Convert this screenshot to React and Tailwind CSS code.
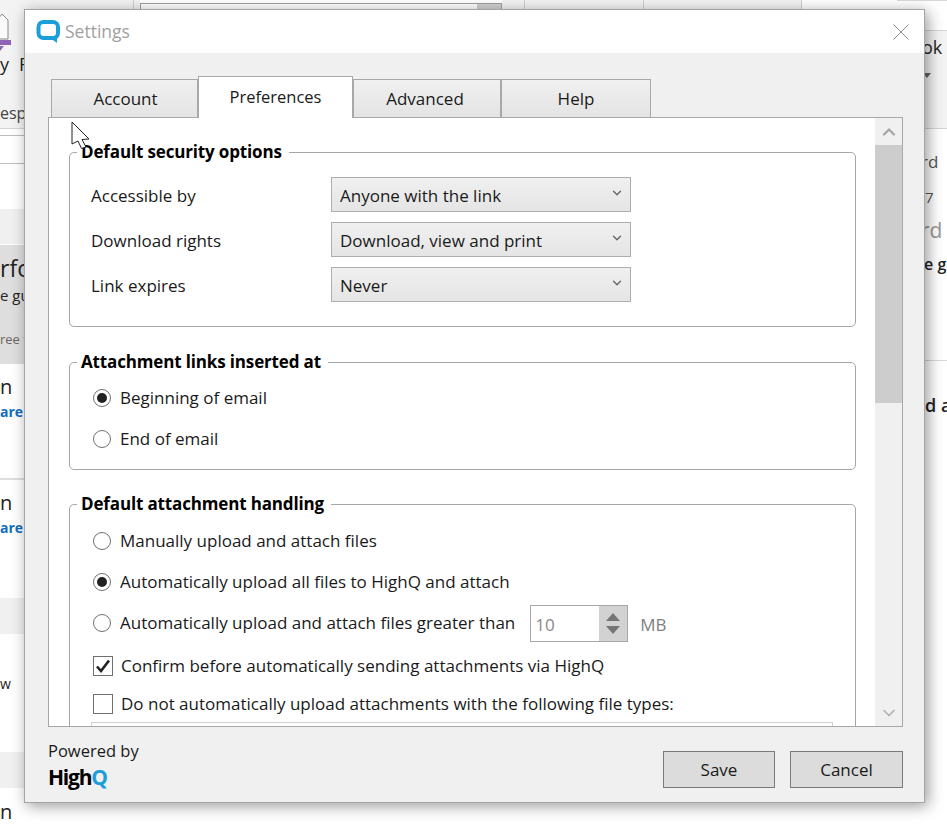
import { ChevronDown, ChevronUp } from "lucide-react";

const Tab = ({ label, active, className }) => (
  <div
    className={
      active
        ? `relative z-10 flex h-[42px] items-start justify-center border border-b-0 border-[#a8a8a8] bg-white pt-[10px] text-[16.500px] text-[#1a1a1a] ${className}`
        : `flex h-[39px] items-start justify-center border border-[#a8a8a8] bg-gradient-to-b from-[#f0f0f0] to-[#e4e4e4] pt-[9px] text-[#1a1a1a] ${className}`
    }
  >
    {label}
  </div>
);

const Group = ({ title, className, children }) => (
  <fieldset className={`ml-5 w-[787px] rounded-[5px] border border-[#a6a6a6] ${className || ""}`}>
    <legend className="ml-[7px] h-5 pl-1 pr-[7px] text-[17px] leading-5 font-bold tracking-[-0.15px] text-black">{title}</legend>
    {children}
  </fieldset>
);

const SelectBox = ({ label, value }) => (
  <>
    <div className="flex h-[35px] items-center pt-[2px]">{label}</div>
    <div className="flex h-[35px] items-center justify-between border border-[#adadad] bg-gradient-to-b from-[#f0f0f0] to-[#e5e5e5] pl-2 pr-[6px]">
      <span className="pt-[2px]">{value}</span>
      <ChevronDown size={14} strokeWidth={2.4} className="mb-[4px] text-[#666]" />
    </div>
  </>
);

const Radio = ({ checked }) => (
  <span className="flex h-[18px] w-[18px] shrink-0 items-center justify-center rounded-full border-[1.5px] border-[#707070] bg-white">
    {checked && <span className="h-[10px] w-[10px] rounded-full bg-[#222]" />}
  </span>
);

const RadioRow = ({ checked, label, className, children }) => (
  <div className={`flex h-5 items-center pl-[23px] ${className || ""}`}>
    <Radio checked={checked} />
    <span className="ml-[9px] whitespace-nowrap">{label}</span>
    {children}
  </div>
);

const CheckRow = ({ checked, label, className }) => (
  <div className={`flex h-5 items-center pl-[23px] ${className || ""}`}>
    <span className="flex h-[20px] w-[20px] shrink-0 items-center justify-center border-[1.5px] border-[#707070] bg-white">
      {checked && (
        <svg width="16" height="14" viewBox="0 0 16 14">
          <path d="M2 7.5 L6 12 L14 1.5" fill="none" stroke="#222" strokeWidth="2.6" />
        </svg>
      )}
    </span>
    <span className="ml-2 whitespace-nowrap">{label}</span>
  </div>
);

const LeftStrip = () => (
  <div className="w-[40px] shrink-0 overflow-hidden whitespace-nowrap text-[#222]">
    <div className="h-[129px] border-b border-[#d4d4d4] bg-[#f3f3f3]">
      <svg width="40" height="52" viewBox="0 0 40 52" className="block">
        <path d="M-6 24 L2 14 L8 20 L8 39 L-6 39 Z" fill="#fafafa" stroke="#8a8a8a" />
        <rect x="0" y="40" width="11" height="5" fill="#8d62b8" />
        <path d="M0 46 L4 46 L0 51 Z" fill="#8d62b8" />
        <circle cx="50" cy="14" r="8" fill="none" stroke="#8a8a8a" />
      </svg>
      <div className="flex h-6 text-[18px] leading-6">
        <span>y</span>
        <span className="ml-[10px]">F</span>
      </div>
      <div className="mt-[27px] text-[16px] leading-5 text-[#444]">espo</div>
    </div>
    <div className="h-[7px] border-b border-[#bdbdbd] bg-white" />
    <div className="h-[28px] border-b border-[#bdbdbd] bg-white" />
    <div className="h-[45px] bg-white" />
    <div className="h-[36px] border-b border-white bg-[#f0f0f0]" />
    <div className="h-[119px] bg-[#dedede]">
      <div className="pt-[9px] text-[23px] leading-7">rfor</div>
      <div className="mt-[3px] text-[15px] leading-5">e gu</div>
      <div className="mt-[24px] text-[13px] leading-5 text-[#666]">ree t</div>
    </div>
    <div className="h-[116px] border-b-2 border-[#dedede] bg-white">
      <div className="pt-[9px] text-[20px] leading-7">n</div>
      <div className="mt-[1px] text-[14px] leading-5 font-bold text-[#106ebe]">are</div>
    </div>
    <div className="h-[118px] bg-white">
      <div className="pt-[9px] text-[20px] leading-7">n</div>
      <div className="mt-[1px] text-[14px] leading-5 font-bold text-[#106ebe]">are</div>
    </div>
    <div className="h-[36px] bg-[#f0f0f0]" />
    <div className="h-[118px] bg-white pt-[40px] text-[14px] leading-5">w</div>
    <div className="h-[36px] bg-[#f0f0f0]" />
    <div className="pt-[10px] text-[20px] leading-7">n</div>
  </div>
);

const RightStrip = () => (
  <div className="w-[50px] shrink-0 overflow-hidden whitespace-nowrap text-[#222]">
    <div className="h-[30px] border-t border-[#d8d8d8] bg-white" />
    <div className="h-[99px] border-y border-[#d4d4d4] bg-[#f3f3f3] pl-[25px] pt-[4px] text-[18px] leading-6">
      <div>ok</div>
      <svg width="8" height="8" viewBox="0 0 8 8" className="ml-[1px] mt-[13px] block">
        <path d="M0 1 L8 1 L4 6 Z" fill="#666" />
      </svg>
    </div>
    <div className="h-[232px] border-b border-[#d8d8d8]">
      <div className="pl-[24px] pt-[23px] text-[17px] leading-5 text-[#555]">rd</div>
      <div className="mt-[15px] pl-[28px] text-[15px] leading-5 text-[#555]">7</div>
      <div className="mt-[13px] pl-[24px] text-[21px] leading-5 text-[#999]">rd</div>
      <div className="mt-[14px] pl-[27px] text-[16px] leading-5 font-semibold">e g</div>
    </div>
    <div className="pl-[28px] pt-[34px] text-[18px] leading-5 font-semibold">d a</div>
  </div>
);

const TopStrip = () => (
  <div className="flex h-[9px] min-w-0 flex-1 overflow-hidden">
    <div className="w-[94px] border-r border-[#d0d0d0] bg-[#f3f3f3]" />
    <div className="w-[6px] bg-[#f3f3f3]" />
    <div className="mt-[3px] flex h-[20px] w-[362px] border border-[#a0a0a0] bg-white">
      <div className="flex-1" />
      <div className="w-[24px] bg-[#d0d0d0]" />
    </div>
    <div className="w-[22px] bg-[#f3f3f3]" />
    <div className="w-[119px] border-l border-[#d0d0d0] bg-[#f3f3f3]" />
    <div className="w-[158px] border-l border-[#d0d0d0] bg-[#f3f3f3]" />
    <div className="flex-1 border-l border-[#d0d0d0] bg-white" />
  </div>
);

const App = () => {
  return (
    <div className="relative h-[824px] w-[947px] overflow-hidden bg-white font-['Open_Sans',sans-serif] text-[17px] leading-5 text-[#1a1a1a]">
      <div className="flex h-full">
        <LeftStrip />
        <TopStrip />
        <RightStrip />
      </div>

      {/* settings dialog */}
      <div className="absolute left-[24px] top-[9px] flex h-[794px] w-[901px] flex-col border border-[#a4a4a4] bg-[#f0f0f0] shadow-[3px_3px_14px_rgba(0,0,0,0.4)]">
        <div className="flex h-[43px] shrink-0 items-center bg-white pl-[11px] pr-[15px]">
          <svg width="25" height="25" viewBox="0 0 25 25">
            <path
              d="M7 3 H17 A5 5 0 0 1 22 8 V14 A5 5 0 0 1 17 19 H7 A5 5 0 0 1 2.500 14 V8 A5 5 0 0 1 7 3 Z"
              fill="none"
              stroke="#1a9fdb"
              strokeWidth="4"
            />
            <path d="M13 18 H21 V24 Z" fill="#1a9fdb" />
          </svg>
          <span className="ml-[4px] pb-[2px] text-[17.500px] text-[#a0a0a0]">Settings</span>
          <svg width="16" height="16" viewBox="0 0 16 16" className="ml-auto">
            <path d="M0.500 0.500 L15.500 15.500 M15.500 0.500 L0.500 15.500" stroke="#8a8a8a" strokeWidth="1" />
          </svg>
        </div>

        <div className="flex min-h-0 flex-1 flex-col pl-[23px] pr-[21px] pt-[23px]">
          <div className="relative -mb-px ml-[3px] flex shrink-0 items-end">
            <Tab label="Account" className="w-[147px] pl-[2px]" />
            <Tab label="Preferences" active className="w-[155px]" />
            <Tab label="Advanced" className="w-[148px] pr-[4px]" />
            <Tab label="Help" className="w-[150px]" />
          </div>

          <div className="flex h-[610px] shrink-0 border border-[#a8a8a8] bg-white">
            <div className="min-w-0 flex-1 overflow-hidden pt-[24px]">
              <Group title="Default security options">
                <div className="grid grid-cols-[240px_300px] gap-y-[10px] pb-[24px] pl-[21px] pt-[15px]">
                  <SelectBox label="Accessible by" value="Anyone with the link" />
                  <SelectBox label="Download rights" value="Download, view and print" />
                  <SelectBox label="Link expires" value="Never" />
                </div>
              </Group>

              <Group title="Attachment links inserted at" className="mt-[25px]">
                <div className="pb-[20px] pt-[16px]">
                  <RadioRow checked label="Beginning of email" />
                  <RadioRow label="End of email" className="mt-[21px]" />
                </div>
              </Group>

              <Group title="Default attachment handling" className="mt-[24px]">
                <div className="pb-6 pt-[17px]">
                  <RadioRow label="Manually upload and attach files" />
                  <RadioRow checked label="Automatically upload all files to HighQ and attach" className="mt-[21px]" />
                  <RadioRow label="Automatically upload and attach files greater than" className="mt-[21px]">
                    <div className="ml-[15px] flex h-[37px] w-[98px] shrink-0 border border-[#a8a8a8] bg-white">
                      <span className="flex flex-1 items-center pl-[4px] pt-[3px] text-[#8a8a8a]">10</span>
                      <div className="flex w-[28px] flex-col items-center justify-center gap-[5px] bg-[#d2d2d2]">
                        <span className="h-0 w-0 border-x-[7px] border-b-[8px] border-x-transparent border-b-[#757575]" />
                        <span className="h-0 w-0 border-x-[7px] border-t-[8px] border-x-transparent border-t-[#757575]" />
                      </div>
                    </div>
                    <span className="ml-[12px] pt-[3px] text-[#808080]">MB</span>
                  </RadioRow>
                  <CheckRow checked label="Confirm before automatically sending attachments via HighQ" className="mt-[23px]" />
                  <CheckRow label="Do not automatically upload attachments with the following file types:" className="mt-[18px]" />
                  <div className="ml-[21px] mt-[8px] h-[100px] w-[742px] border border-[#d0d0d0] bg-white" />
                </div>
              </Group>
            </div>

            <div className="flex w-[27px] shrink-0 flex-col bg-[#f0f0f0]">
              <div className="flex h-[27px] items-center justify-center">
                <ChevronUp size={20} strokeWidth={2.8} className="text-[#a6a6a6]" />
              </div>
              <div className="h-[258px] bg-[#cdcdcd]" />
              <div className="flex-1" />
              <div className="flex h-[27px] items-center justify-center">
                <ChevronDown size={20} strokeWidth={2} className="text-[#b0b0b0]" />
              </div>
            </div>
          </div>

          <div className="flex flex-1 justify-between">
            <div className="pt-[14px]">
              <div className="text-[16.500px]">Powered by</div>
              <div className="mt-[5px] text-[21px] leading-[22px] font-bold tracking-[-1.2px] text-black">
                High<span className="text-[#1a9fdb]">Q</span>
              </div>
            </div>
            <div className="flex gap-[15px] pt-[24px]">
              <div className="flex h-[37px] w-[112px] items-center justify-center border border-[#7a7a7a] bg-[#dcdcdc]">Save</div>
              <div className="flex h-[37px] w-[113px] items-center justify-center border border-[#7a7a7a] bg-[#dcdcdc]">Cancel</div>
            </div>
          </div>
        </div>
      </div>

      {/* mouse pointer */}
      <svg width="22" height="30" viewBox="0 0 22 30" className="absolute left-[71px] top-[121px]">
        <path d="M1 1 L18 18 L11 18.500 L15 26 L10.500 27.500 L7 20 L1 23 Z" fill="#fff" stroke="#222" strokeWidth="1" />
      </svg>
    </div>
  );
};

export default App;
